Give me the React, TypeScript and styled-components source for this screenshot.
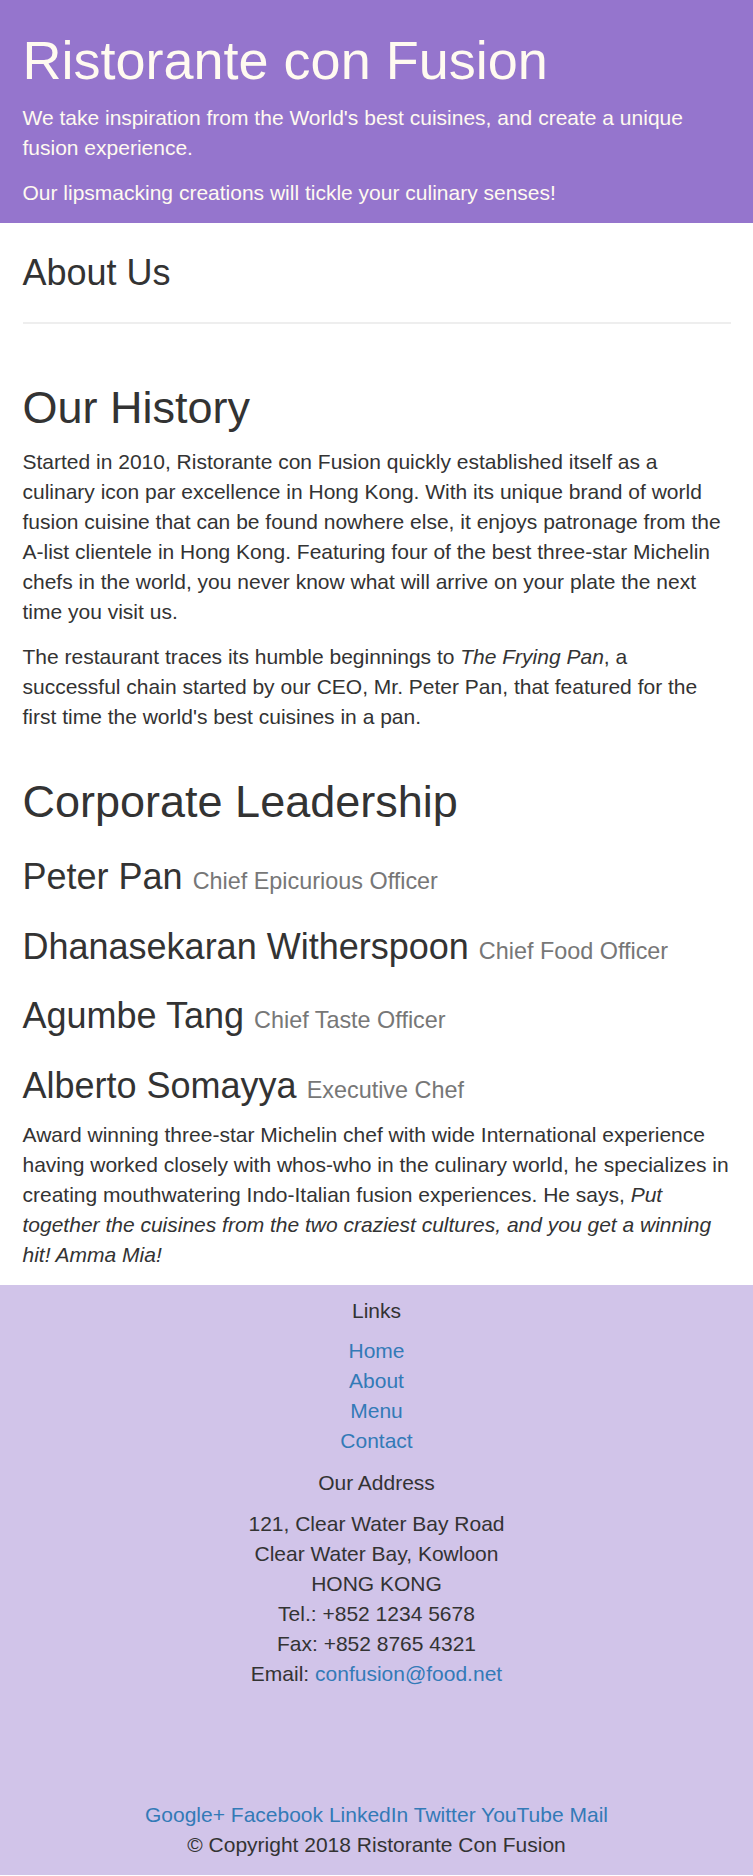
import React from 'react';
import styled, { createGlobalStyle } from 'styled-components';

const GlobalStyle = createGlobalStyle`
  html, body {
    margin: 0;
    padding: 0;
    background: #fff;
  }
  body {
    font-family: "Liberation Sans", Arial, Helvetica, sans-serif;
    font-size: 21px;
    line-height: 30px;
    color: #333;
  }
  * {
    box-sizing: border-box;
  }
`;

const Header = styled.header`
  background-color: #9575cd;
  color: floralwhite;
  padding: 31px 22.5px 15px;
`;

const Title = styled.h1`
  font-size: 54px;
  font-weight: 400;
  line-height: 1.1;
  margin: 0 0 13px;
`;

const Lead = styled.p`
  margin: 0 0 15px;

  &:last-child {
    margin-bottom: 0;
  }
`;

const Main = styled.main`
  padding: 0 22.5px;
`;

const Section = styled.section`
  display: flow-root;
`;

const PageTitle = styled.h3`
  font-size: 36px;
  font-weight: 400;
  line-height: 1.1;
  margin: 30px 0 15px;
`;

const Divider = styled.hr`
  border: 0;
  border-top: 2px solid #eee;
  margin: 29px 0;
`;

const SectionTitle = styled.h2`
  font-size: 45px;
  font-weight: 400;
  line-height: 1.1;
  margin: 30px 0 15px;
`;

const Text = styled.p`
  margin: 0 0 15px;
`;

const LeaderName = styled.h3`
  font-size: 36px;
  font-weight: 400;
  line-height: 1.1;
  margin: 30px 0 15px;

  small {
    font-size: 65%;
    font-weight: 400;
    line-height: 1;
    color: #777;
  }
`;

const Footer = styled.footer`
  background-color: #d1c4e9;
  padding: 14px 22.5px 15.6px;
  text-align: center;
`;

const FooterHeading = styled.h5`
  font-size: 21px;
  font-weight: 400;
  line-height: 1.1;
  margin: 0 0 14px;
`;

const LinkList = styled.ul`
  list-style: none;
  margin: 0 0 15px;
  padding: 0;
`;

const Link = styled.a`
  color: #337ab7;
  text-decoration: none;
`;

const Address = styled.address`
  font-style: normal;
  margin: 0;
`;

const SocialRow = styled.div`
  padding-top: 111px;
`;

const Copyright = styled.p`
  margin: 0;
`;

type Leader = {
  name: string;
  designation: string;
};

const leaders: Leader[] = [
  { name: 'Peter Pan', designation: 'Chief Epicurious Officer' },
  { name: 'Dhanasekaran Witherspoon', designation: 'Chief Food Officer' },
  { name: 'Agumbe Tang', designation: 'Chief Taste Officer' },
  { name: 'Alberto Somayya', designation: 'Executive Chef' },
];

const navLinks = ['Home', 'About', 'Menu', 'Contact'];
const socials = ['Google+', 'Facebook', 'LinkedIn', 'Twitter', 'YouTube', 'Mail'];

const App = () => {
  return (
    <>
      <GlobalStyle />
      <Header>
        <Title>Ristorante con Fusion</Title>
        <Lead>
          We take inspiration from the World's best cuisines, and create a unique fusion experience.
        </Lead>
        <Lead>Our lipsmacking creations will tickle your culinary senses!</Lead>
      </Header>

      <Main>
        <Section>
          <PageTitle>About Us</PageTitle>
          <Divider />
        </Section>

        <Section>
          <SectionTitle>Our History</SectionTitle>
          <Text>
            Started in 2010, Ristorante con Fusion quickly established itself as a culinary icon par
            excellence in Hong Kong. With its unique brand of world fusion cuisine that can be found
            nowhere else, it enjoys patronage from the A-list clientele in Hong Kong. Featuring four
            of the best three-star Michelin chefs in the world, you never know what will arrive on
            your plate the next time you visit us.
          </Text>
          <Text>
            The restaurant traces its humble beginnings to <em>The Frying Pan</em>, a successful
            chain started by our CEO, Mr. Peter Pan, that featured for the first time the world's
            best cuisines in a pan.
          </Text>
        </Section>

        <Section>
          <SectionTitle>Corporate Leadership</SectionTitle>
          {leaders.map((leader) => (
            <LeaderName key={leader.name}>
              {leader.name} <small>{leader.designation}</small>
            </LeaderName>
          ))}
          <Text>
            Award winning three-star Michelin chef with wide International experience having worked
            closely with whos-who in the culinary world, he specializes in creating mouthwatering
            Indo-Italian fusion experiences. He says,{' '}
            <em>
              Put together the cuisines from the two craziest cultures, and you get a winning hit!
              Amma Mia!
            </em>
          </Text>
        </Section>
      </Main>

      <Footer>
        <FooterHeading>Links</FooterHeading>
        <LinkList>
          {navLinks.map((item) => (
            <li key={item}>
              <Link href="#">{item}</Link>
            </li>
          ))}
        </LinkList>
        <FooterHeading>Our Address</FooterHeading>
        <Address>
          121, Clear Water Bay Road
          <br />
          Clear Water Bay, Kowloon
          <br />
          HONG KONG
          <br />
          Tel.: +852 1234 5678
          <br />
          Fax: +852 8765 4321
          <br />
          Email: <Link href="#">confusion@food.net</Link>
        </Address>
        <SocialRow>
          {socials.map((s, i) => (
            <React.Fragment key={s}>
              {i > 0 && ' '}
              <Link href="#">{s}</Link>
            </React.Fragment>
          ))}
        </SocialRow>
        <Copyright>© Copyright 2018 Ristorante Con Fusion</Copyright>
      </Footer>
    </>
  );
};

export default App;
